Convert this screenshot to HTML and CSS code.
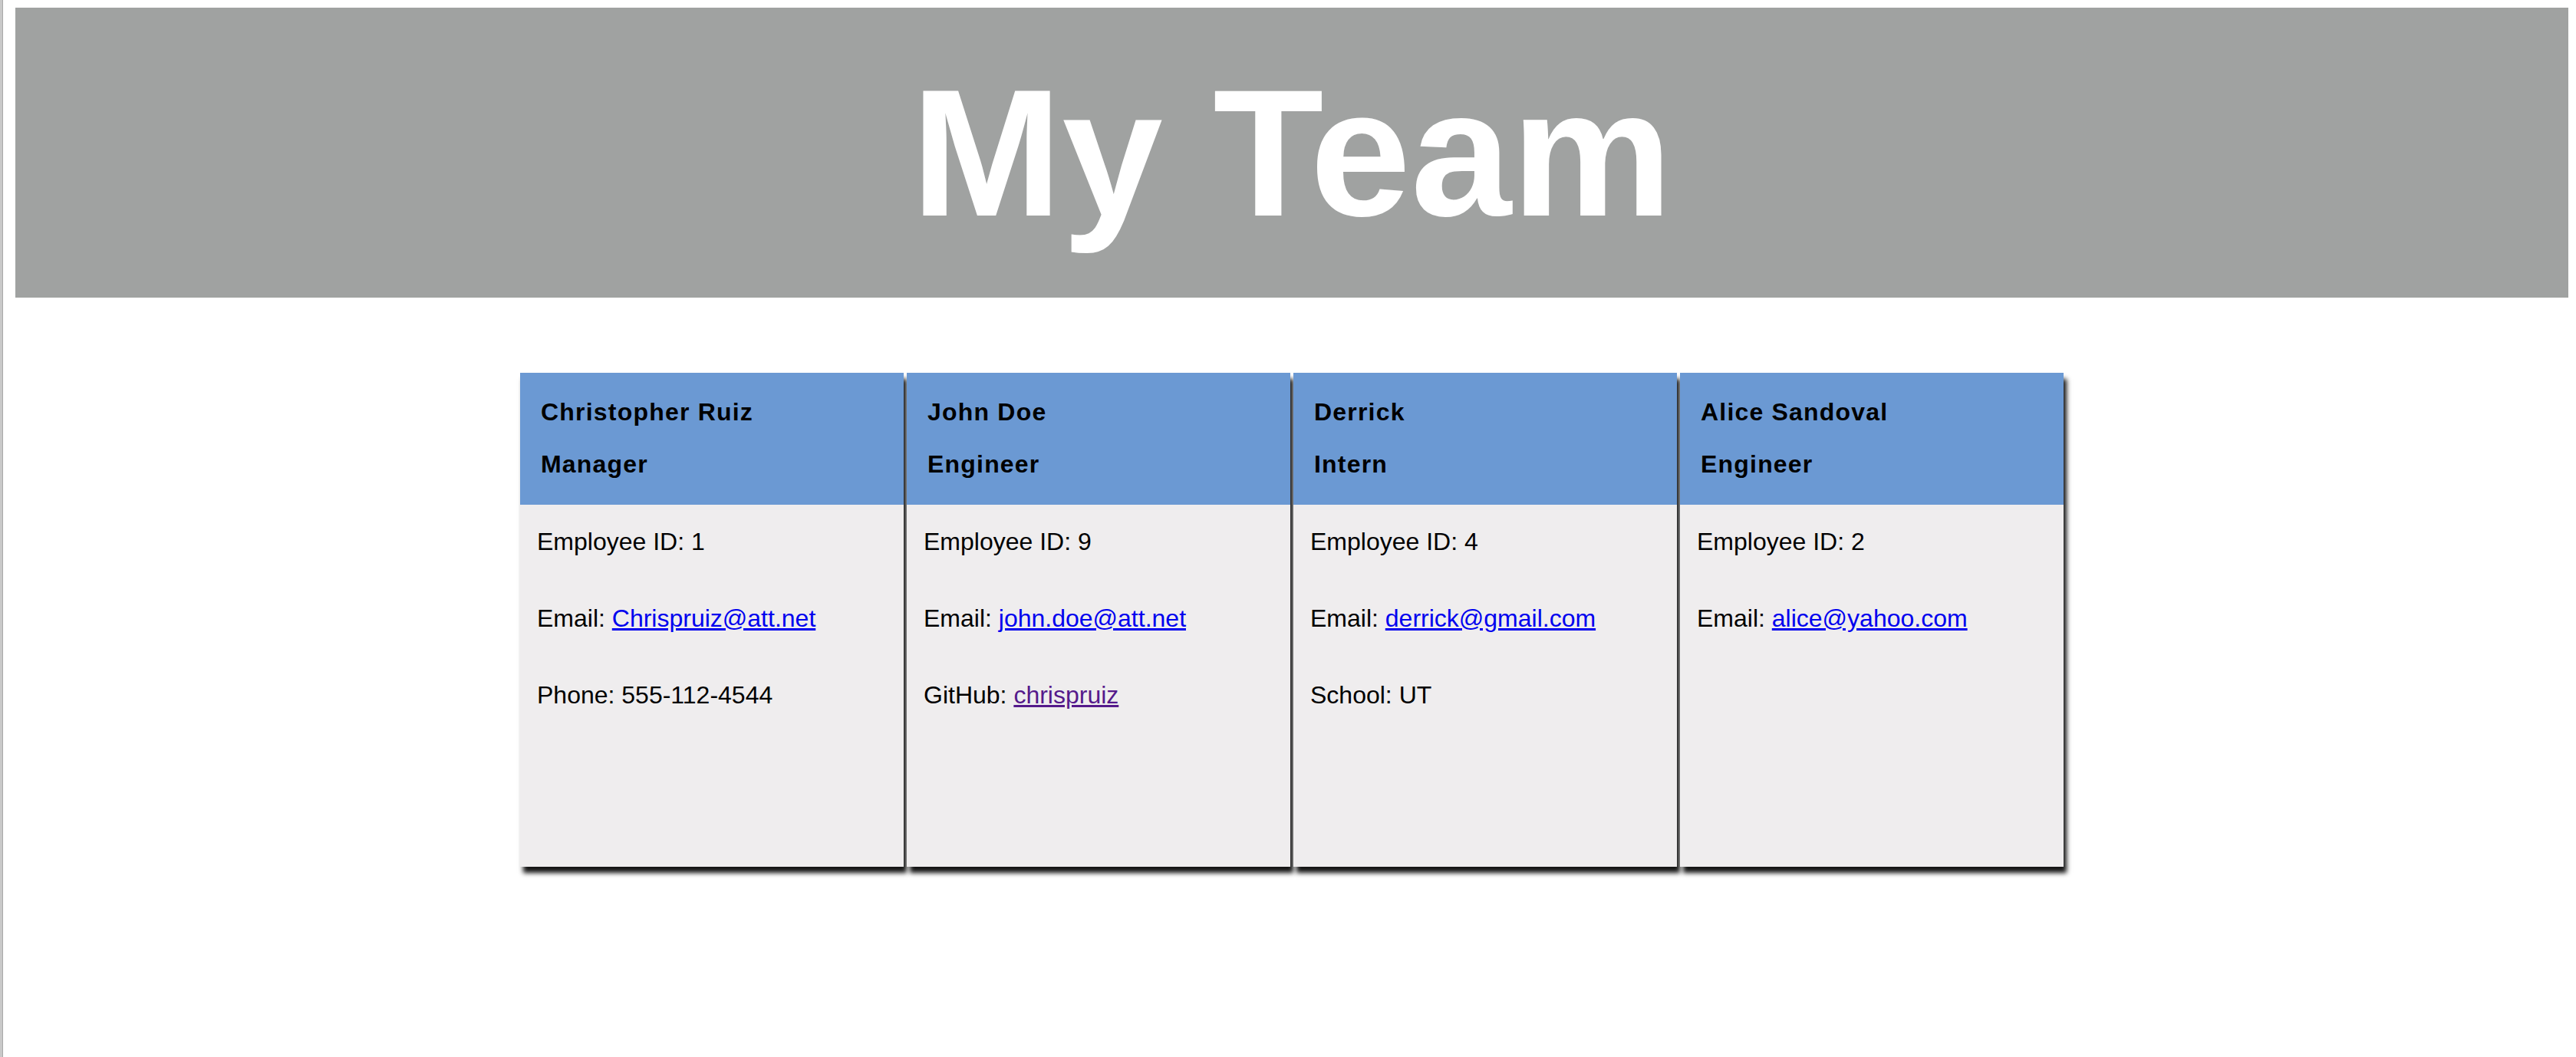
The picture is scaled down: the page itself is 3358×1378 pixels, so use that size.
FILE: index.html
```html
<!DOCTYPE html>
<html lang="en">
<head>
<meta charset="utf-8">
<title>My Team</title>
<link rel="stylesheet" href="styles.css">
</head>
<body>
<div class="window">
  <header class="banner">
    <h1 class="banner-title">My Team</h1>
  </header>
  <main class="team">
    <section class="card">
      <div class="card-head">
        <h2 class="card-name">Christopher Ruiz</h2>
        <h3 class="card-role">Manager</h3>
      </div>
      <div class="card-body">
        <p class="card-line">Employee ID: 1</p>
        <p class="card-line">Email: <a class="link" href="#">Chrispruiz@att.net</a></p>
        <p class="card-line">Phone: 555-112-4544</p>
      </div>
    </section>
    <section class="card">
      <div class="card-head">
        <h2 class="card-name">John Doe</h2>
        <h3 class="card-role">Engineer</h3>
      </div>
      <div class="card-body">
        <p class="card-line">Employee ID: 9</p>
        <p class="card-line">Email: <a class="link" href="#">john.doe@att.net</a></p>
        <p class="card-line">GitHub: <a class="link link-visited" href="#">chrispruiz</a></p>
      </div>
    </section>
    <section class="card">
      <div class="card-head">
        <h2 class="card-name">Derrick</h2>
        <h3 class="card-role">Intern</h3>
      </div>
      <div class="card-body">
        <p class="card-line">Employee ID: 4</p>
        <p class="card-line">Email: <a class="link" href="#">derrick@gmail.com</a></p>
        <p class="card-line">School: UT</p>
      </div>
    </section>
    <section class="card">
      <div class="card-head">
        <h2 class="card-name">Alice Sandoval</h2>
        <h3 class="card-role">Engineer</h3>
      </div>
      <div class="card-body">
        <p class="card-line">Employee ID: 2</p>
        <p class="card-line">Email: <a class="link" href="#">alice@yahoo.com</a></p>
      </div>
    </section>
  </main>
</div>
</body>
</html>
```

FILE: styles.css
```css
html, body {
  margin: 0;
  padding: 0;
  background: #ffffff;
}

body {
  font-family: "Liberation Sans", Arial, Helvetica, sans-serif;
  color: #000;
}

.window {
  min-height: 1378px;
  box-sizing: border-box;
  border-left: 3px solid #c9c9c9;
  box-shadow: inset 1px 0 0 #a8a8a8;
  padding: 10px 10px 0 17px;
}

.banner {
  background: #a0a2a1;
  padding: 69px 0;
}

.banner-title {
  margin: 0;
  font-size: 236px;
  line-height: 240px;
  font-weight: bold;
  color: #ffffff;
  text-align: center;
}

.team {
  display: flex;
  justify-content: center;
  gap: 4px;
  margin-top: 98px;
}

.card {
  width: 500px;
  box-shadow: 4px 8px 6px rgba(0, 0, 0, 0.92);
  background: #efedee;
}

.card-head {
  background: #6b99d3;
  padding: 17px 26px 19px 27px;
}

.card-name,
.card-role {
  margin: 0;
  font-size: 32px;
  line-height: 68px;
  font-weight: bold;
  letter-spacing: 1.2px;
}

.card-body {
  height: 472px;
  padding: 0 22px;
}

.card-line {
  margin: 0 0 4px;
  font-size: 32px;
  line-height: 96px;
}

.link {
  color: #0000ee;
  text-decoration: underline;
}

.link-visited {
  color: #551a8b;
}
```
